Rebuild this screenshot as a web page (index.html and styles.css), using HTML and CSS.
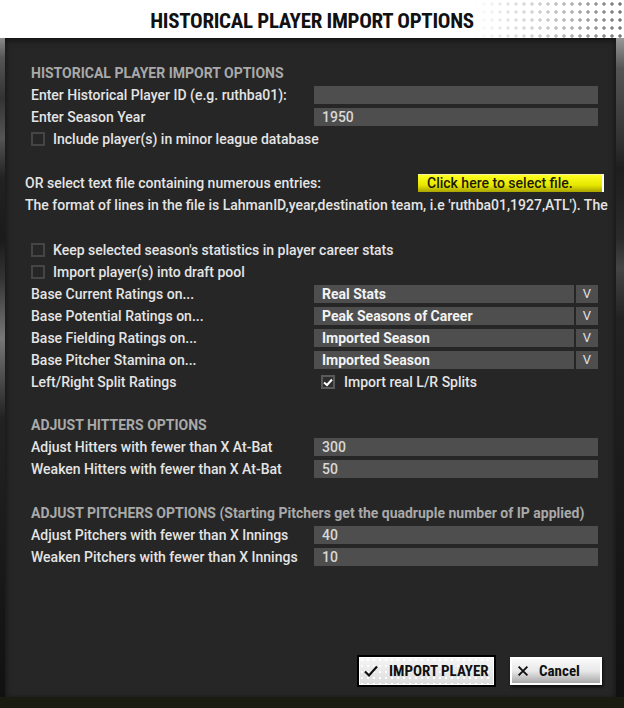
FILE: index.html
```html
<!DOCTYPE html>
<html>
<head>
<meta charset="utf-8">
<link rel="stylesheet" href="styles.css">
</head>
<body>
<div class="header"><h1 class="title">HISTORICAL PLAYER IMPORT OPTIONS</h1></div>
<div class="stage">
  <div class="side side-left"></div>
  <div class="panel">
    <div class="section">
      <div class="heading">HISTORICAL PLAYER IMPORT OPTIONS</div>
      <div class="row"><span class="label">Enter Historical Player ID (e.g. ruthba01):</span><span class="input"></span></div>
      <div class="row"><span class="label">Enter Season Year</span><span class="input">1950</span></div>
      <div class="check-row"><span class="box"></span><span>Include player(s) in minor league database</span></div>
    </div>

    <div class="file-section">
      <div class="file-row"><span>OR select text file containing numerous entries:</span><span class="yellow-btn">Click here to select file.</span></div>
      <div class="format">The format of lines in the file is LahmanID,year,destination team, i.e 'ruthba01,1927,ATL'). The</div>
    </div>

    <div class="section sec-ratings">
      <div class="check-row"><span class="box"></span><span>Keep selected season's statistics in player career stats</span></div>
      <div class="check-row"><span class="box"></span><span>Import player(s) into draft pool</span></div>
      <div class="row"><span class="label">Base Current Ratings on...</span><span class="select"><span class="sel-val">Real Stats</span><span class="sel-arrow">V</span></span></div>
      <div class="row"><span class="label">Base Potential Ratings on...</span><span class="select"><span class="sel-val">Peak Seasons of Career</span><span class="sel-arrow">V</span></span></div>
      <div class="row"><span class="label">Base Fielding Ratings on...</span><span class="select"><span class="sel-val">Imported Season</span><span class="sel-arrow">V</span></span></div>
      <div class="row"><span class="label">Base Pitcher Stamina on...</span><span class="select"><span class="sel-val">Imported Season</span><span class="sel-arrow">V</span></span></div>
      <div class="row"><span class="label">Left/Right Split Ratings</span><span class="inline-check"><span class="box checked"><svg viewBox="0 0 14 14" width="14" height="14"><path d="M3 7.5 L6 10 L11 4.5" fill="none" stroke="#fff" stroke-width="2"/></svg></span><span>Import real L/R Splits</span></span></div>
    </div>

    <div class="section sec-hitters">
      <div class="heading">ADJUST HITTERS OPTIONS</div>
      <div class="row"><span class="label">Adjust Hitters with fewer than X At-Bat</span><span class="input">300</span></div>
      <div class="row"><span class="label">Weaken Hitters with fewer than X At-Bat</span><span class="input">50</span></div>
    </div>

    <div class="section sec-pitchers">
      <div class="heading">ADJUST PITCHERS OPTIONS (Starting Pitchers get the quadruple number of IP applied)</div>
      <div class="row"><span class="label">Adjust Pitchers with fewer than X Innings</span><span class="input">40</span></div>
      <div class="row"><span class="label">Weaken Pitchers with fewer than X Innings</span><span class="input">10</span></div>
    </div>

    <div class="buttons">
      <div class="btn btn-import"><svg viewBox="0 0 16 16" width="16" height="16"><path d="M2 8.5 L6 12.5 L14 3.5" fill="none" stroke="#111" stroke-width="2.2"/></svg><span>IMPORT PLAYER</span></div>
      <div class="btn btn-cancel"><svg viewBox="0 0 16 16" width="14" height="14"><path d="M3 3 L13 13 M13 3 L3 13" fill="none" stroke="#111" stroke-width="2.2"/></svg><span>Cancel</span></div>
    </div>
  </div>
  <div class="side side-right"></div>
</div>
<div class="footer"></div>
</body>
</html>
```

FILE: styles.css
```css
* { box-sizing: border-box; }
html, body { margin: 0; padding: 0; }
body {
  width: 624px;
  height: 708px;
  overflow: hidden;
  background: #15170f;
  font-family: Roboto, "Noto Sans", sans-serif;
}
.header {
  height: 38px;
  background:
    linear-gradient(to right, #fff 0%, #fff 76%, rgba(255,255,255,0.6) 88%, rgba(255,255,255,0) 100%),
    radial-gradient(circle, #777 1.4px, transparent 2px) 0 0 / 8px 8px,
    #fff;
  display: flex;
  align-items: center;
  justify-content: center;
}
.title {
  margin: 0;
  font-family: "Liberation Sans Narrow", "Roboto Condensed", Roboto, sans-serif;
  font-stretch: condensed;
  font-weight: 700;
  font-size: 21px;
  color: #111;
  letter-spacing: -0.3px;
  padding-top: 3px;
}
.stage {
  display: flex;
  height: 659px;
}
.side { height: 100%; }
.side-left {
  width: 5px;
  background: linear-gradient(to bottom, #8a8a8a 0, #555 20px, #333 60px, #555 100px, #222 140px, #1a1a1a 200px, #333 240px, #777 300px, #222 380px, #111 100%);
}
.side-right {
  width: 8px;
  background: linear-gradient(to bottom, #999 0, #555 30px, #333 100px, #1e1e1e 130px, #2a2a2a 200px, #444 230px, #222 280px, #111 100%);
}
.panel {
  width: 611px;
  height: 100%;
  background: #262626;
  padding: 24px 0 10px 26px;
  display: flex;
  flex-direction: column;
  color: #e4e4e4;
  font-size: 14px;
  font-weight: 500;
  overflow: hidden;
  box-shadow: 0 2px 6px rgba(0,0,0,0.6) inset;
}
.section { display: flex; flex-direction: column; }
.heading {
  height: 22px;
  line-height: 22px;
  color: #a9a9a9;
  font-weight: 700;
  font-size: 14px;
}
.row {
  height: 22px;
  display: flex;
  align-items: center;
}
.label {
  width: 283px;
  flex: none;
  white-space: nowrap;
}
.input {
  width: 284px;
  height: 18px;
  background: #4e4e4e;
  color: #d8d8d8;
  padding-left: 8px;
  line-height: 18px;
  font-size: 14px;
}
.check-row {
  height: 22px;
  display: flex;
  align-items: center;
  gap: 8px;
}
.box {
  width: 14px;
  height: 14px;
  border: 2px solid #454545;
  flex: none;
  display: inline-flex;
  align-items: center;
  justify-content: center;
}
.box.checked { border-color: #5a5a5a; background: #2e2e2e; }
.box svg { display: block; flex: none; }
.file-section { margin: 22px 0 0 -6px; }
.file-row {
  height: 22px;
  display: flex;
  align-items: center;
  justify-content: space-between;
  padding-right: 12px;
}
.yellow-btn {
  width: 186px;
  height: 18px;
  background: linear-gradient(to bottom, #ffff20 0%, #e6e600 60%, #a8a400 100%);
  border-right: 2px solid #fff;
  border-top: 1px solid #f4f4a0;
  color: #1a1a00;
  padding-left: 9px;
  line-height: 17px;
  font-size: 14px;
}
.format {
  height: 22px;
  line-height: 22px;
  white-space: nowrap;
}
.sec-ratings { margin-top: 23px; }
.sec-hitters { margin-top: 21px; }
.sec-pitchers { margin-top: 22px; }
.select {
  display: flex;
  gap: 2px;
  height: 18px;
}
.sel-val {
  width: 260px;
  background: #4e4e4e;
  color: #f2f2f2;
  font-weight: 700;
  padding-left: 8px;
  line-height: 18px;
}
.sel-arrow {
  width: 22px;
  background: #4e4e4e;
  color: #e0e0e0;
  text-align: center;
  line-height: 18px;
  font-size: 13px;
  font-weight: 400;
}
.inline-check {
  display: flex;
  align-items: center;
  gap: 9px;
  padding-left: 7px;
}
.buttons {
  margin-top: auto;
  display: flex;
  justify-content: flex-end;
  align-items: center;
  gap: 14px;
  padding-right: 14px;
}
.btn {
  display: flex;
  align-items: center;
  color: #111;
  font-family: "Liberation Sans Narrow", "Roboto Condensed", Roboto, sans-serif;
  font-stretch: condensed;
  font-weight: 700;
  font-size: 15px;
}
.btn-import {
  width: 139px;
  height: 32px;
  border: 2px solid #000;
  outline: 1px solid #fff;
  outline-offset: -3px;
  background:
    radial-gradient(circle, #fff 0.8px, transparent 1.2px) 0 0 / 6px 6px,
    linear-gradient(to bottom, #f6f6f6, #dcdcdc);
  padding-left: 4px;
  gap: 10px;
}
.btn-cancel {
  width: 92px;
  height: 28px;
  border: 2px solid #fff;
  background: linear-gradient(to bottom, #fafafa 0%, #e8e8e8 50%, #a8a8a8 100%);
  box-shadow: 1px 2px 3px rgba(0,0,0,0.7);
  padding-left: 4px;
  gap: 9px;
}
.footer {
  height: 11px;
  background: #1a1c12;
}
```
